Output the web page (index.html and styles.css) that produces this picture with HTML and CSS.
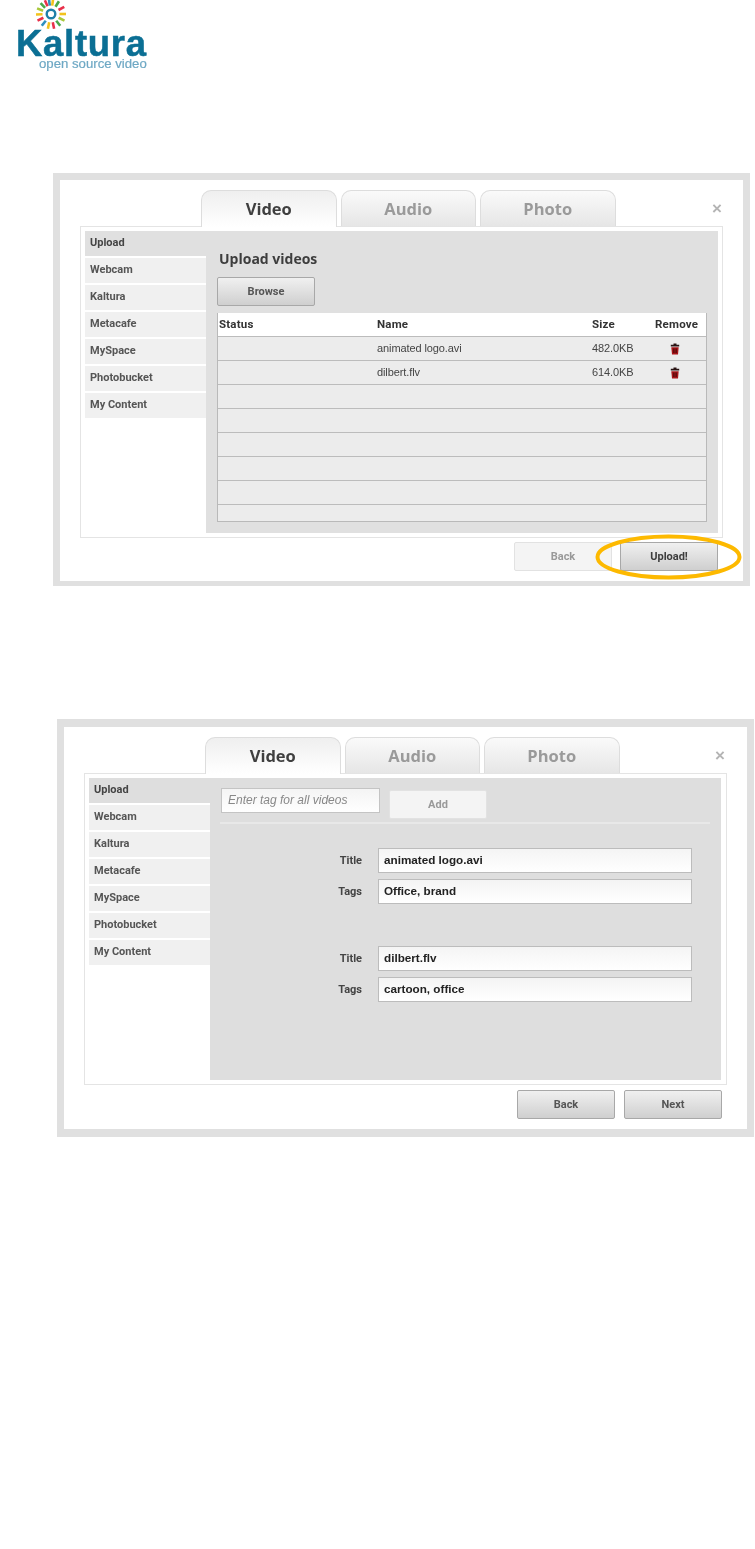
FILE: index.html
```html
<!DOCTYPE html>
<html lang="en">
<head>
<meta charset="utf-8">
<title>Kaltura upload</title>
<link rel="stylesheet" href="styles.css">
</head>
<body>
<header class="logo">
  <svg class="sun" width="46" height="30" viewBox="0 0 46 30" aria-hidden="true">
    <g stroke-width="2.600" fill="none">
      <line x1="23" y1="-1" x2="23" y2="5.500" stroke="#f2c21c" transform="rotate(8 23 14)"/>
      <line x1="23" y1="-1" x2="23" y2="5.500" stroke="#4aa84a" transform="rotate(32 23 14)"/>
      <line x1="23" y1="-1" x2="23" y2="5.500" stroke="#e8304a" transform="rotate(62 23 14)"/>
      <line x1="23" y1="-1" x2="23" y2="5.500" stroke="#f2c21c" transform="rotate(90 23 14)"/>
      <line x1="23" y1="-1" x2="23" y2="5.500" stroke="#a8c83a" transform="rotate(116 23 14)"/>
      <line x1="23" y1="-1" x2="23" y2="5.500" stroke="#4aa84a" transform="rotate(142 23 14)"/>
      <line x1="23" y1="-1" x2="23" y2="5.500" stroke="#e8304a" transform="rotate(168 23 14)"/>
      <line x1="23" y1="-1" x2="23" y2="5.500" stroke="#f2c21c" transform="rotate(192 23 14)"/>
      <line x1="23" y1="-1" x2="23" y2="5.500" stroke="#2f8fc0" transform="rotate(218 23 14)"/>
      <line x1="23" y1="-1" x2="23" y2="5.500" stroke="#e8304a" transform="rotate(244 23 14)"/>
      <line x1="23" y1="-1" x2="23" y2="5.500" stroke="#f2c21c" transform="rotate(268 23 14)"/>
      <line x1="23" y1="-1" x2="23" y2="5.500" stroke="#a8c83a" transform="rotate(292 23 14)"/>
      <line x1="23" y1="-1" x2="23" y2="5.500" stroke="#4aa84a" transform="rotate(316 23 14)"/>
      <line x1="23" y1="-1" x2="23" y2="5.500" stroke="#e8304a" transform="rotate(336 23 14)"/>
      <line x1="23" y1="-1" x2="23" y2="5.500" stroke="#2f8fc0" transform="rotate(352 23 14)"/>
    </g>
    <circle cx="23" cy="14" r="4.300" fill="#fff" stroke="#1e7fa8" stroke-width="2.400"/>
  </svg>
  <div class="logo-name">Kaltura</div>
  <div class="logo-tag">open source video</div>
</header>

<section class="panel panel-one">
  <div class="tabs-row">
    <div class="tabs">
      <div class="tab tab-active">Video</div>
      <div class="tab">Audio</div>
      <div class="tab">Photo</div>
    </div>
    <div class="close">×</div>
  </div>
  <div class="frame">
    <div class="inner">
      <nav class="side">
        <div class="side-item side-active">Upload</div>
        <div class="side-item">Webcam</div>
        <div class="side-item">Kaltura</div>
        <div class="side-item">Metacafe</div>
        <div class="side-item">MySpace</div>
        <div class="side-item">Photobucket</div>
        <div class="side-item">My Content</div>
      </nav>
      <div class="main main-upload">
        <h2 class="main-title">Upload videos</h2>
        <div class="btn browse">Browse</div>
        <div class="table">
          <div class="tr th"><span>Status</span><span>Name</span><span>Size</span><span>Remove</span></div>
          <div class="tr"><span></span><span>animated logo.avi</span><span>482.0KB</span><span class="trash-cell">
            <svg width="10" height="12" viewBox="0 0 10 12"><path d="M3.500 .6h3v1.200h2.700v1.800H.8V1.800h2.700z" fill="#2a1414"/><path d="M1.300 4.200h7.400L8 11.600H2z" fill="#a81418"/><path d="M3.600 5.500v4.500M5 5.500v4.500M6.400 5.500v4.500" stroke="#3a0808" stroke-width=".7"/></svg></span></div>
          <div class="tr"><span></span><span>dilbert.flv</span><span>614.0KB</span><span class="trash-cell">
            <svg width="10" height="12" viewBox="0 0 10 12"><path d="M3.500 .6h3v1.200h2.700v1.800H.8V1.800h2.700z" fill="#2a1414"/><path d="M1.300 4.200h7.400L8 11.600H2z" fill="#a81418"/><path d="M3.600 5.500v4.500M5 5.500v4.500M6.400 5.500v4.500" stroke="#3a0808" stroke-width=".7"/></svg></span></div>
          <div class="tr"></div>
          <div class="tr"></div>
          <div class="tr"></div>
          <div class="tr"></div>
          <div class="tr"></div>
          <div class="tr tr-last"></div>
        </div>
      </div>
    </div>
  </div>
  <div class="actions">
    <div class="btn btn-off">Back</div>
    <div class="btn upload">Upload!
      <svg class="ring" width="147" height="46" viewBox="0 0 147 46" aria-hidden="true"><ellipse cx="73.500" cy="23" rx="71" ry="20.500" fill="none" stroke="#fdb900" stroke-width="4"/></svg>
    </div>
  </div>
</section>

<section class="panel panel-two">
  <div class="tabs-row">
    <div class="tabs">
      <div class="tab tab-active">Video</div>
      <div class="tab">Audio</div>
      <div class="tab">Photo</div>
    </div>
    <div class="close">×</div>
  </div>
  <div class="frame">
    <div class="inner">
      <nav class="side">
        <div class="side-item side-active">Upload</div>
        <div class="side-item">Webcam</div>
        <div class="side-item">Kaltura</div>
        <div class="side-item">Metacafe</div>
        <div class="side-item">MySpace</div>
        <div class="side-item">Photobucket</div>
        <div class="side-item">My Content</div>
      </nav>
      <div class="main main-tags">
        <div class="tag-bar">
          <div class="tag-input">Enter tag for all videos</div>
          <div class="btn btn-off add">Add</div>
        </div>
        <div class="fields">
          <div class="field"><span class="field-label">Title</span><div class="field-box">animated logo.avi</div></div>
          <div class="field"><span class="field-label">Tags</span><div class="field-box">Office, brand</div></div>
          <div class="field field-gap"><span class="field-label">Title</span><div class="field-box">dilbert.flv</div></div>
          <div class="field"><span class="field-label">Tags</span><div class="field-box">cartoon, office</div></div>
        </div>
      </div>
    </div>
  </div>
  <div class="actions">
    <div class="btn">Back</div>
    <div class="btn">Next</div>
  </div>
</section>
</body>
</html>
```
FILE: styles.css
```css
* { box-sizing: border-box; }
html, body { margin: 0; padding: 0; }
body {
  background: #fff;
  width: 755px;
  height: 1549px;
  overflow: hidden;
  font-family: "Open Sans", "Liberation Sans", sans-serif;
  color: #444;
}
.logo { height: 173px; padding: 0 0 0 16px; filter: blur(.4px); }
.sun { display: block; margin-left: 12px; }
.logo-name {
  font: bold 36.500px/30px "Liberation Sans", sans-serif;
  letter-spacing: .7px;
  -webkit-text-stroke: .5px #0b6f94;
  color: #0b6f94;
  margin-top: -1px;
}
.logo-tag {
  font: 13.200px/12px "Liberation Sans", sans-serif;
  color: #6ea8c4;
  margin: -1px 0 0 23px;
  -webkit-text-stroke: .2px #6ea8c4;
}
.panel {
  width: 697px;
  border: 7px solid #e0e0e0;
  border-bottom-width: 5px;
  padding: 10px 20px 0;
  background: #fff;
  filter: blur(.35px);
}
.panel-one { height: 413px; margin-left: 53px; }
.panel-two { height: 418px; margin: 133px 0 0 57px; border-top-width: 8px; border-bottom-width: 8px; }
.tabs-row { display: flex; height: 36px; padding-left: 121px; position: relative; z-index: 1; }
.tabs { display: flex; gap: 4px; }
.tab {
  width: 135.500px;
  height: 36px;
  border: 1px solid #ddd;
  border-bottom: 0;
  border-radius: 10px 10px 0 0;
  background: linear-gradient(#fafafa, #e6e6e6);
  font-size: 16.500px;
  font-weight: 700;
  line-height: 36px;
  text-align: center;
  color: #9a9a9a;
}
.tab-active {
  background: linear-gradient(#efefef, #fff);
  color: #3f3f3f;
  height: 37px;
}
.close {
  margin-left: auto;
  margin-right: 1px;
  font: bold 17px/38px "Liberation Sans", sans-serif;
  color: #b4b4b4;
}
.panel-two .close { margin-right: 2px; }
.frame {
  width: 643px;
  height: 312px;
  border: 1px solid #e4e4e4;
  padding: 4px;
}
.panel-two .frame { padding-right: 5px; }
.inner { display: flex; height: 302px; }
.side { width: 121px; flex: none; display: flex; flex-direction: column; gap: 2px; }
.side-item {
  height: 25px;
  background: #f0f0f0;
  font: 700 11px/24px Roboto, sans-serif;
  padding-left: 5px;
  color: #555;
}
.side-active { background: #e0e0e0; color: #444; }
.main { flex: 1; background: #e0e0e0; padding: 0 11px; }
.panel-two .main, .panel-two .side-active { background: #dedede; }
.main-title { margin: 20px 0 10px 2px; font-size: 14px; line-height: 16px; font-weight: 700; color: #3d3d3d; }
.btn {
  width: 98px;
  height: 29px;
  border: 1px solid #a8a8a8;
  border-radius: 2px;
  background: linear-gradient(#f0f0f0, #cfcfcf);
  font: 700 11px/28px Roboto, sans-serif;
  text-align: center;
  color: #555;
  position: relative;
}
.btn-off { background: #f4f4f4; border-color: #e2e2e2; color: #999; }
.browse { margin-bottom: 7px; }
.table { width: 490px; border: 1px solid #b9b9b9; border-top: 0; background: #ececec; }
.tr {
  display: grid;
  grid-template-columns: 158px 215px 63px 1fr;
  height: 24px;
  border-bottom: 1px solid #bcbcbc;
  padding-left: 1px;
  font: 11px/23px "Liberation Sans", sans-serif;
  letter-spacing: -.1px;
  color: #444;
  align-items: center;
}
.th { height: 24px; background: #fff; font: 700 11.500px/23px Roboto, sans-serif; letter-spacing: .2px; color: #333; }
.tr-last { height: 16px; border-bottom: 0; }
.trash-cell { display: flex; justify-content: center; padding-right: 12px; }
.actions { display: flex; justify-content: flex-end; gap: 8px; width: 643px; margin-top: 4px; padding-right: 5px; }
.panel-two .actions { gap: 9px; margin-top: 5px; }
.upload { color: #3d3d3d; }
.ring { position: absolute; left: -26px; top: -9px; }
.main-tags { padding: 10px 11px 0 10px; }
.tag-bar { display: flex; align-items: flex-start; gap: 9px; height: 36px; border-bottom: 2px solid #e8e8e8; width: 490px; }
.tag-input {
  width: 159px;
  height: 25px;
  margin-left: 1px;
  border: 1px solid #c4c4c4;
  background: linear-gradient(#f4f4f4, #fff);
  font: italic 12px/23px "Liberation Sans", sans-serif;
  padding-left: 6px;
  color: #888;
}
.add { margin-top: 2px; }
.fields { padding-top: 24px; }
.field { display: flex; align-items: center; height: 25px; margin-bottom: 6px; }
.field-gap { margin-top: 42px; }
.field-label { width: 142px; text-align: right; font: 700 11px/16px Roboto, sans-serif; color: #444; }
.field-box {
  width: 314px;
  height: 25px;
  margin-left: 16px;
  border: 1px solid #bcbcbc;
  background: linear-gradient(#f4f4f4, #fff);
  font: 700 11.700px/22px "Liberation Sans", sans-serif;
  padding-left: 5px;
  color: #222;
}
```
